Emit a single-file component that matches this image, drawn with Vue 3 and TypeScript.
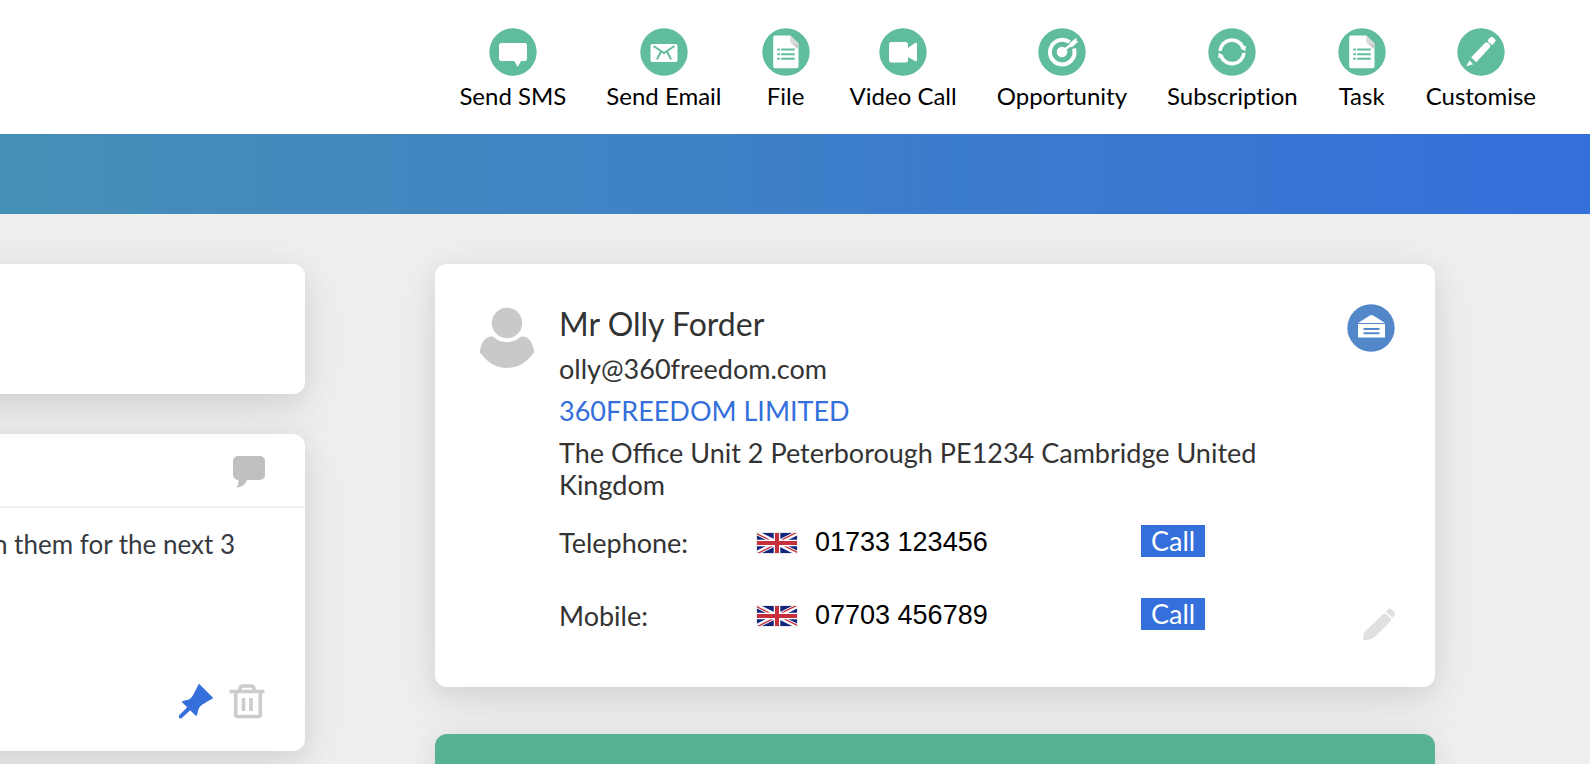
<script setup lang="ts">
type IconName = 'sms' | 'email' | 'file' | 'video' | 'target' | 'cycle' | 'pencil'

interface Action {
  label: string
  icon: IconName
}

interface Phone {
  id: string
  label: string
  number: string
}

const actions: Action[] = [
  { label: 'Send SMS', icon: 'sms' },
  { label: 'Send Email', icon: 'email' },
  { label: 'File', icon: 'file' },
  { label: 'Video Call', icon: 'video' },
  { label: 'Opportunity', icon: 'target' },
  { label: 'Subscription', icon: 'cycle' },
  { label: 'Task', icon: 'file' },
  { label: 'Customise', icon: 'pencil' },
]

const phones: Phone[] = [
  { id: 'telephone', label: 'Telephone:', number: '01733 123456' },
  { id: 'mobile', label: 'Mobile:', number: '07703 456789' },
]
</script>

<template>
  <div class="page">
    <header class="toolbar">
      <button v-for="action in actions" :key="action.label" type="button" class="action">
        <svg class="action-icon" viewBox="0 0 48 48" aria-hidden="true">
          <circle cx="24" cy="24" r="23.7" fill="#60bc9e" />
          <path
            v-if="action.icon === 'sms'"
            fill="#fff"
            d="M12.5 15h23a2.5 2.5 0 0 1 2.5 2.5v13a2.5 2.5 0 0 1-2.5 2.5H32l-3.300 6-3.400-6H12.500a2.500 2.500 0 0 1-2.500-2.500v-13a2.500 2.500 0 0 1 2.500-2.500z"
          />
          <g v-else-if="action.icon === 'email'">
            <rect x="10.500" y="16" width="27" height="18" rx="2" fill="#fff" />
            <path
              d="M13.500 18L24 25l10.500-7M21 23.500l-4 8M27 23.500l4 8"
              fill="none"
              stroke="#60bc9e"
              stroke-width="1.900"
            />
          </g>
          <g v-else-if="action.icon === 'file'">
            <path fill="#fff" d="M13 7.500h15.300L36.500 15.500V38.500a1.800 1.800 0 0 1-1.800 1.800H13a1.800 1.800 0 0 1-1.800-1.800V9.300A1.800 1.800 0 0 1 13 7.500z" />
            <path fill="#dcdcdc" d="M28.300 7.500l8.200 8H29.800a1.500 1.500 0 0 1-1.500-1.500z" />
            <path fill="#c9c9c9" d="M29.500 15.500h7v6z" />
            <path
              d="M15.300 21.500h2.600M19.100 21.500h13.700M15.300 26.300h2.600M19.100 26.300h13.700M15.300 30.700h2.600M19.100 30.700h13.700"
              stroke="#60bc9e"
              stroke-width="2"
            />
          </g>
          <g v-else-if="action.icon === 'video'" fill="#fff">
            <rect x="10" y="14" width="19" height="20.500" rx="2.500" />
            <path d="M28 20.500l8-5.500a1.200 1.200 0 0 1 2 1v16a1.200 1.200 0 0 1-2 1l-8-4.500z" />
          </g>
          <g v-else-if="action.icon === 'target'">
            <path
              d="M31.500 14.200A12.300 12.300 0 1 0 36 20.500"
              fill="none"
              stroke="#fff"
              stroke-width="4"
            />
            <path d="M24.500 23.500L36 13.800" stroke="#60bc9e" stroke-width="5" />
            <circle cx="24" cy="24" r="5.300" fill="#fff" />
            <path d="M25 23l9.500-7.500" stroke="#fff" stroke-width="2.400" />
            <path fill="#fff" d="M31.500 15l7-5.200v3.400h2l-6.500 6-2.500-.7z" />
          </g>
          <g v-else-if="action.icon === 'cycle'">
            <path
              d="M12 22.900A12 12 0 0 1 35 19.500M36 24.800A12 12 0 0 1 13 28.300"
              fill="none"
              stroke="#fff"
              stroke-width="3.600"
            />
            <path fill="#fff" d="M32.500 20.300l5.500-2.500-.7 5.400zM15.500 27.500l-5.500 2.500.7-5.400z" />
          </g>
          <g v-else fill="#fff">
            <path d="M28.200 14.800a2 2 0 0 1 2.600 0l2 2a2 2 0 0 1 0 2.600L19.200 34.300l-5-5z" />
            <rect x="31.500" y="9.500" width="6.500" height="6.500" rx="1.500" transform="rotate(42 34.800 12.700)" />
            <path d="M12.500 32.500l3.700 3.800-7 2z" />
          </g>
        </svg>
        <span>{{ action.label }}</span>
      </button>
    </header>

    <div class="banner"></div>

    <main class="content">
      <div class="timeline">
        <section class="card summary"></section>
        <article class="card note">
          <div class="note-head">
            <button type="button" class="icon-button" aria-label="Comment">
              <svg width="32" height="32" viewBox="0 0 32 32" aria-hidden="true">
                <path
                  fill="#c0c0c0"
                  d="M5 0h22a5 5 0 0 1 5 5v14a5 5 0 0 1-5 5H14c-1.500 4.500-5 7.500-11 7.500 2-1.500 2.500-4 2.200-7.500H5a5 5 0 0 1-5-5V5a5 5 0 0 1 5-5z"
                />
              </svg>
            </button>
          </div>
          <p class="note-text">n them for the next 3</p>
          <div class="note-tools">
            <button type="button" class="icon-button" aria-label="Pin">
              <svg width="36" height="36" viewBox="0 0 36 36" aria-hidden="true">
                <path
                  fill="#346fdb"
                  d="M21 .8L35.300 15c-6.500 4-12 6.500-14 9.500-1.500 2.300-1.300 6-3 8.700L12.200 27.200 3.600 35.200H1v-2.600L9.200 24.200 3.600 18.700c2.700-2 6-1.200 8.600-3C15.500 13.200 17 7.500 21 .8z"
                />
              </svg>
            </button>
            <button type="button" class="icon-button" aria-label="Delete">
              <svg width="36" height="36" viewBox="0 0 36 36" fill="none" stroke="#ccc" aria-hidden="true">
                <path stroke-width="3.400" d="M.5 8.500h35" />
                <path
                  stroke-width="3.600"
                  d="M6.700 8.500v23a2 2 0 0 0 2 2h20.600a2 2 0 0 0 2-2v-23M11 8V5.500a2.500 2.500 0 0 1 2.500-2.500h9A2.500 2.500 0 0 1 25 5.500V8"
                />
                <path stroke-width="3.600" d="M14.500 15v13M22 15v13" />
              </svg>
            </button>
          </div>
        </article>
      </div>

      <aside class="details">
        <section class="card contact">
          <svg class="avatar" viewBox="0 0 56 62" fill="#c9c9c9" aria-hidden="true">
            <circle cx="28" cy="16" r="15.200" />
            <path d="M14.500 29.700C17.500 33 22 35 28 35s10.500-2 13.500-5.300C50 28.500 54 36 55.200 45.300 48 55.500 38.500 61 28 61S8 55.500.8 45.300C2 36 6 28.500 14.500 29.700z" />
          </svg>
          <div class="contact-body">
            <h1 class="name">Mr Olly Forder</h1>
            <p class="line">olly@360freedom.com</p>
            <p class="line"><a href="#company">360FREEDOM LIMITED</a></p>
            <p class="address">The Office Unit 2 Peterborough PE1234 Cambridge United Kingdom</p>
            <div v-for="phone in phones" :key="phone.id" class="phone">
              <label class="phone-label" :for="phone.id">{{ phone.label }}</label>
              <svg class="flag" viewBox="0 0 40 20" aria-hidden="true">
                <path fill="#12247c" d="M0 0h40v20H0z" />
                <path d="M0 0l40 20M40 0L0 20" stroke="#fff" stroke-width="4.400" />
                <path
                  fill="#c5303c"
                  d="M0 0l13.500 6.700h-3L0 1.500zM40 0L26.500 6.700h-3L37 0zM0 20l13.500-6.700h3L3 20zM40 20l-13.500-6.700h3L40 18.500z"
                />
                <path d="M20 0v20M0 10h40" stroke="#fff" stroke-width="6.600" />
                <path d="M20 0v20M0 10h40" stroke="#c5303c" stroke-width="4" />
              </svg>
              <input :id="phone.id" class="phone-number" type="tel" :value="phone.number" />
              <button type="button" class="call">Call</button>
            </div>
          </div>
          <div class="contact-tools">
            <button type="button" class="icon-button" aria-label="Open mail">
              <svg width="48" height="48" viewBox="0 0 48 48" aria-hidden="true">
                <circle cx="24" cy="24" r="23.700" fill="#5287c9" />
                <path fill="#fff" d="M11 19L23.300 11.300a2.500 2.500 0 0 1 2.600 0L38 19z" />
                <path fill="#fff" d="M11 20h27v13.500H11z" />
                <path stroke="#5287c9" stroke-width="1.900" d="M16.500 25h16M16.500 29.200h16" />
              </svg>
            </button>
            <button type="button" class="icon-button" aria-label="Edit contact">
              <svg width="32" height="34" viewBox="0 0 32 34" fill="#e0e0e0" aria-hidden="true">
                <path d="M20 7.300a2.500 2.500 0 0 1 3.400 0l4 4a2.300 2.300 0 0 1 0 3.300L10.500 31l-3 1.300L0 33.500l1-8z" />
                <path d="M25.200 2.200a2.500 2.500 0 0 1 3.300 0l3 3a2.200 2.200 0 0 1 0 3.300L29.200 10.700 23 4.500z" />
              </svg>
            </button>
          </div>
        </section>
        <section class="card green"></section>
      </aside>
    </main>
  </div>
</template>

<style>
html,
body,
#app {
  margin: 0;
  height: 100%;
}

body {
  background: #efefef;
}
</style>

<style scoped>
.page {
  display: flex;
  flex-direction: column;
  min-height: 100%;
  overflow: hidden;
  color: #333;
  font-family: Lato, 'Liberation Sans', sans-serif;
  font-size: 27px;
  line-height: 32px;
}

button {
  border: 0;
  padding: 0;
  background: none;
  color: inherit;
  font: inherit;
  cursor: pointer;
}

.toolbar {
  display: flex;
  justify-content: flex-end;
  gap: 40px;
  padding: 28px 54px 22px 0;
  background: #fff;
}

.action {
  display: flex;
  flex-direction: column;
  align-items: center;
  gap: 4px;
  color: #000;
  font-size: 24px;
  font-variant-ligatures: none;
  white-space: nowrap;
}

.action-icon {
  width: 48px;
  height: 48px;
}

.banner {
  height: 80px;
  background: linear-gradient(90deg, #4590b6, #346fdb);
}

.content {
  display: flex;
  flex: 1;
  gap: 130px;
  padding: 50px 155px 0 0;
}

.timeline {
  display: flex;
  flex: 305 1 0;
  flex-direction: column;
  gap: 40px;
  min-width: 0;
}

.details {
  display: flex;
  flex: 1000 1 0;
  flex-direction: column;
  gap: 47px;
  min-width: 0;
}

.card {
  border-radius: 12px;
  background: #fff;
  box-shadow:
    0 8px 24px rgba(50, 50, 75, 0.1),
    0 12px 60px rgba(60, 60, 70, 0.08);
}

/* The timeline cards bleed off the left edge of the window. */
.timeline .card {
  margin-left: -100px;
}

.summary {
  height: 130px;
}

.note-head {
  display: flex;
  justify-content: flex-end;
  padding: 22px 40px 18px;
  border-bottom: 2px solid #efefef;
}

.icon-button {
  display: flex;
}

.note-text {
  margin: 0;
  padding: 20px 70px 0 0;
  color: #363a41;
  font-size: 26px;
  text-align: right;
  white-space: nowrap;
}

.note-tools {
  display: flex;
  justify-content: flex-end;
  gap: 15px;
  padding: 123px 40px 32px;
}

.contact {
  display: flex;
  padding: 40px 40px 46px 44px;
}

.avatar {
  flex: none;
  width: 56px;
  height: 62px;
  margin-top: 3px;
}

.contact-body {
  flex: 1;
  padding: 0 0 7px 24px;
}

.name {
  margin: 0 0 9px;
  font-size: 32px;
  font-weight: 400;
  line-height: 40px;
}

.line {
  margin: 0 0 10px;
}

.line a {
  color: #346fdb;
  text-decoration: none;
}

.address {
  max-width: 700px;
  margin: 0 0 20px;
}

.phone {
  display: flex;
  align-items: center;
  margin-bottom: 33px;
  height: 40px;
}

.phone:last-child {
  margin-bottom: 0;
}

.phone-label {
  width: 198px;
  padding-top: 4px;
}

.flag {
  width: 40px;
  height: 20px;
  margin-top: 4px;
  box-shadow: 0 0 1px #888;
}

.phone-number {
  width: 240px;
  margin: 0 86px 0 18px;
  border: 0;
  padding: 2px 0 0;
  background: none;
  color: #000;
  font-family: 'Liberation Sans', Arial, sans-serif;
  font-size: 27px;
}

.call {
  padding: 0 10px;
  background: #346fdb;
  color: #fff;
}

.contact-tools {
  display: flex;
  flex-direction: column;
  align-items: flex-end;
  justify-content: space-between;
}

.green {
  flex: 1;
  min-height: 30px;
  border-bottom-left-radius: 0;
  border-bottom-right-radius: 0;
  background: #57b193;
}
</style>
